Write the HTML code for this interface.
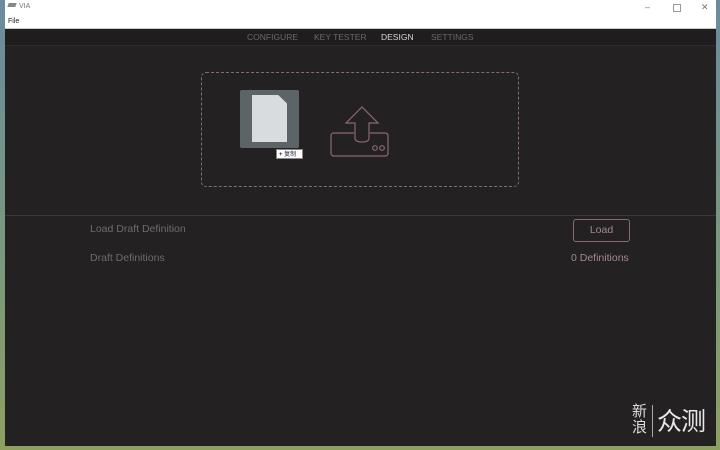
<!DOCTYPE html>
<html><head><meta charset="utf-8"><style>
body{margin:0;width:720px;height:450px;overflow:hidden;background:linear-gradient(180deg,#6b8aa0 0%,#7a9a7a 60%,#8ea060 100%);font-family:"Liberation Sans","Noto Sans CJK SC",sans-serif;position:relative}
.win{position:absolute;left:5px;top:0;width:711px;height:446px;background:#232122}
.title{position:absolute;left:0;top:0;width:711px;height:17px;background:#fff;font-size:7px;color:#777}
.menu{position:absolute;left:0;top:17px;width:711px;height:11px;background:#fff;font-size:7px;color:#222;border-bottom:1px solid #ccc}
.nav{position:absolute;left:0;top:29px;width:711px;height:16px;background:#1f1d1e;border-bottom:1px solid #2e2c2d;font-size:8.5px;color:#6b6869}
.nav span{position:absolute;top:3px}
.drop{position:absolute;left:196px;top:72px;width:318px;height:115px;border:1px dashed #8a6a70;border-radius:5px;box-sizing:border-box}
.sep{position:absolute;left:0;top:215px;width:711px;height:1px;background:#3a3839}
.lbl{position:absolute;font-size:10.5px;color:#6e6b6c}
.btn{position:absolute;left:568px;top:219px;width:57px;height:23px;border:1px solid #8a6a70;border-radius:3px;box-sizing:border-box;color:#a5898d;font-size:10.5px;text-align:center;line-height:21px}
</style></head><body>
<div class="win">
<div class="title"><span style="position:absolute;left:3px;top:3px;width:8px;height:4px;background:#888;transform:skew(-20deg)"></span><span style="position:absolute;left:14px;top:3px">VIA</span>
<span style="position:absolute;left:640px;top:2px;font-size:9px">–</span><span style="position:absolute;left:668px;top:4px;width:6px;height:6px;border:1px solid #999"></span><span style="position:absolute;left:696px;top:2px;font-size:9px">✕</span></div>
<div class="menu"><span style="position:absolute;left:3px;top:1px">File</span></div>
<div class="nav"><span style="left:242px">CONFIGURE</span><span style="left:309px">KEY TESTER</span><span style="left:376px;color:#d8d6d7">DESIGN</span><span style="left:426px">SETTINGS</span></div>
<div class="drop"></div>
<div style="position:absolute;left:235px;top:90px;width:59px;height:58px;background:#5d6468;border-radius:2px"></div>
<div style="position:absolute;left:247px;top:95px;width:35px;height:47px;background:#d8dcde;clip-path:polygon(0 0,75% 0,100% 18%,100% 100%,0 100%)"></div>
<div style="position:absolute;left:271px;top:149px;width:27px;height:10px;background:#fff;border:1px solid #888;font-size:6px;color:#224;line-height:10px;box-sizing:border-box;padding-left:2px"><b>+</b> 复制</div>
<svg style="position:absolute;left:325px;top:100px" width="62" height="60" viewBox="0 0 62 60" fill="none" stroke="#8a6a70" stroke-width="1.2">
<path d="M25 38 V23 H16 L32 7 L48 23 H39 V38 Q39 42 32 42 Q25 42 25 38 Z"/>
<path d="M24 33 H4 Q1 33 1 36 V53 Q1 56 4 56 H55 Q58 56 58 53 V36 Q58 33 55 33 H40"/>
<circle cx="45" cy="48" r="2.3"/><circle cx="52" cy="48" r="2.3"/></svg>
<div class="sep"></div>
<div class="lbl" style="left:85px;top:223px">Load Draft Definition</div>
<div class="lbl" style="left:85px;top:252px">Draft Definitions</div>
<div class="btn">Load</div>
<div class="lbl" style="left:566px;top:252px;color:#a5898d">0 Definitions</div>
<div style="position:absolute;left:627px;top:404px;font-size:15px;color:#ddd;line-height:16px;width:16px">新浪</div>
<div style="position:absolute;left:647px;top:405px;width:1px;height:32px;background:#aaa"></div>
<div style="position:absolute;left:652px;top:402px;font-size:25px;color:#e8e8e8;letter-spacing:-1px">众测</div>
</div>
</body></html>
